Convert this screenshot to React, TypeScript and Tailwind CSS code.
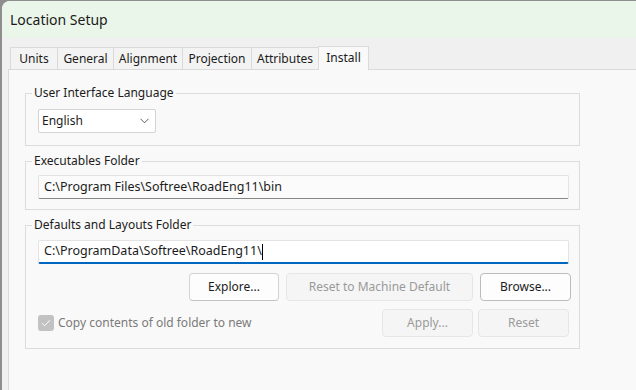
const font = { fontFamily: '"Noto Sans", "Open Sans", sans-serif' };

type Tab = { label: string; w: string; active?: boolean };

const tabs: Tab[] = [
  { label: 'Units', w: 'w-[47px]' },
  { label: 'General', w: 'w-[56px]' },
  { label: 'Alignment', w: 'w-[69px]' },
  { label: 'Projection', w: 'w-[69px]' },
  { label: 'Attributes', w: 'w-[67px]' },
  { label: 'Install', w: 'w-[51px]', active: true },
];

function Button({ label, w, disabled, primary }: { label: string; w: string; disabled?: boolean; primary?: boolean }) {
  return (
    <button
      className={
        'h-[28px] rounded-[4px] border text-[12px] ' +
        w +
        ' ' +
        (disabled
          ? 'bg-[#f5f5f5] border-[#e6e6e6] text-[#9a9a9a]'
          : primary
            ? 'bg-[#fdfdfd] border-[#bcbcbc] text-[#1b1b1b]'
            : 'bg-[#fdfdfd] border-[#d3d3d3] border-b-[#c2c2c2] text-[#1b1b1b]')
      }
    >
      {label}
    </button>
  );
}

function Group({ title, className, children }: { title: string; className?: string; children: React.ReactNode }) {
  return (
    <fieldset className={'mx-[16px] border border-[#dcdcdc] w-[555px] ' + (className ?? '')}>
      <legend className="-ml-[6px] px-[2px] text-[12px] leading-[16px] text-[#1b1b1b]">{title}</legend>
      {children}
    </fieldset>
  );
}

export default function App() {
  return (
    <div className="w-[636px] h-[390px] overflow-hidden bg-[#8e8e8e] flex pt-px" style={font}>
      <div className="w-[2px] shrink-0" />
      <div className="flex-1 flex flex-col rounded-tl-[8px] overflow-hidden bg-[#f0f0f0]">
        <div className="h-[37px] shrink-0 bg-[#eaf6ea] flex items-center pl-[8px] text-[14px] text-[#1b1b1b]">
          Location Setup
        </div>
        <div className="h-[31px] shrink-0 flex items-end pl-[8px]">
          {tabs.map((t) =>
            t.active ? (
              <div
                key={t.label}
                className={
                  'h-[24px] -mb-px relative z-10 border border-b-0 border-[#dadada] bg-[#f9f9f9] flex items-center justify-center pb-[2px] text-[12px] text-[#1b1b1b] ' +
                  t.w
                }
              >
                {t.label}
              </div>
            ) : (
              <div
                key={t.label}
                className={
                  'h-[22px] border-t border-l border-[#dadada] bg-[#f3f3f3] flex items-center justify-center text-[12px] text-[#1b1b1b] ' +
                  t.w
                }
              >
                {t.label}
              </div>
            )
          )}
        </div>
        <div className="flex-1 ml-[6px] border-t border-l border-[#dadada] bg-[#f9f9f9] text-[#1b1b1b]">
          <Group title="User Interface Language" className="mt-[15px] pl-[12px] pt-[8px] pb-[12px]">
            <div className="w-[118px] h-[24px] bg-white border border-[#d4d4d4] rounded-[2px] flex items-center justify-between pl-[3px] pr-[6px] text-[12px]">
              <span>English</span>
              <svg width="9" height="6" viewBox="0 0 9 6" fill="none" stroke="#5f5f5f" strokeWidth="1">
                <polyline points="0.5,0.8 4.5,4.8 8.5,0.8" />
              </svg>
            </div>
          </Group>
          <Group title="Executables Folder" className="mt-[7px] pl-[12px] pr-[10px] pt-[6px] pb-[10px]">
            <div className="h-[24px] bg-[#fbfbfb] border border-[#e3e3e3] border-b-[#868686] rounded-[2px] flex items-center pl-[5px] text-[12.5px] text-[#1b1b1b]">
              C:\Program Files\Softree\RoadEng11\bin
            </div>
          </Group>
          <Group title="Defaults and Layouts Folder" className="mt-[7px] pl-[12px] pr-[10px] pt-[7px] pb-[11px]">
            <div className="h-[24px] bg-white border border-[#e3e3e3] border-b-2 border-b-[#0067c0] rounded-[2px] flex items-center pl-[5px] text-[12.5px] text-[#1b1b1b]">
              <span>C:\ProgramData\Softree\RoadEng11\</span>
              <span className="w-px h-[16px] bg-black" />
            </div>
            <div className="mt-[9px] flex justify-end gap-[7px] -mr-[2px]">
              <Button label="Explore..." w="w-[90px]" />
              <Button label="Reset to Machine Default" w="w-[187px]" disabled />
              <Button label="Browse..." w="w-[91px]" primary />
            </div>
            <div className="mt-[8px] flex items-center">
              <div className="w-[16px] h-[16px] rounded-[3px] bg-[#c2c2c2] flex items-center justify-center">
                <svg width="10" height="8" viewBox="0 0 10 8" fill="none" stroke="#ffffff" strokeWidth="1">
                  <polyline points="1,4.2 3.6,6.8 9,1.2" />
                </svg>
              </div>
              <span className="ml-[4px] text-[12px] text-[#7a7a7a]">Copy contents of old folder to new</span>
              <div className="ml-auto flex gap-[5px]">
                <Button label="Apply..." w="w-[91px]" disabled />
                <Button label="Reset" w="w-[91px]" disabled />
              </div>
            </div>
          </Group>
        </div>
      </div>
    </div>
  );
}
